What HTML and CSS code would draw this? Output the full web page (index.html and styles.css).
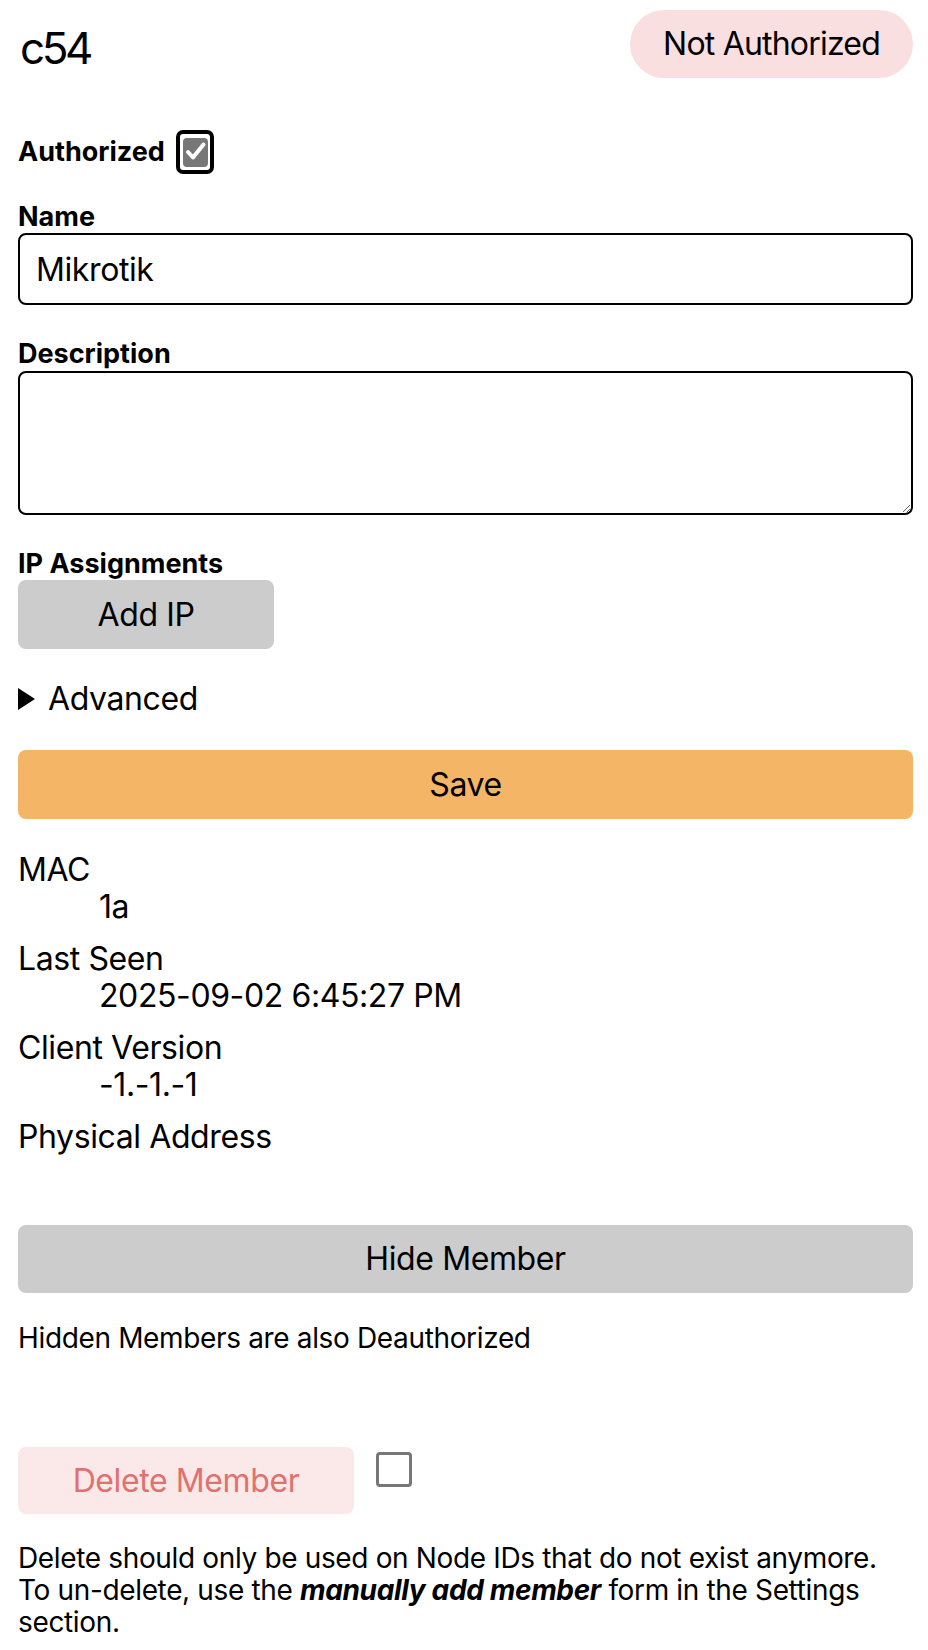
FILE: index.html
```html
<!DOCTYPE html>
<html lang="en">
<head>
    <meta charset="UTF-8">
    <meta name="viewport" content="width=device-width, initial-scale=1.0">
    <title>Member c54</title>
    <link rel="stylesheet" href="styles.css">
</head>
<body>
    <div class="member-head">
        <h1>c54</h1>
        <span class="status">Not Authorized</span>
    </div>
    <form class="member-form" onsubmit="return false">
        <div class="auth-row">
            <label class="auth-label" for="authorized">Authorized</label>
            <span class="check-ring" id="authorized">
                <span class="check-box">
                    <svg width="25" height="29" viewBox="0 0 25 29">
                        <path d="M5 14 L10 19.5 L20.5 6.5" fill="none" stroke="#fff" stroke-width="4" stroke-linecap="round" stroke-linejoin="round"/>
                    </svg>
                </span>
            </span>
        </div>
        <label class="field-label" for="name">Name</label>
        <input type="text" id="name" class="field" value="Mikrotik">
        <label class="field-label" for="description">Description</label>
        <textarea id="description" class="field area"></textarea>
        <label class="field-label">IP Assignments</label>
        <button type="button" class="btn add-ip">Add IP</button>
        <details class="advanced">
            <summary>Advanced</summary>
        </details>
        <button type="submit" class="btn save">Save</button>
    </form>
    <dl class="info">
        <dt>MAC</dt>
        <dd>1a</dd>
        <dt>Last Seen</dt>
        <dd>2025-09-02 6:45:27 PM</dd>
        <dt>Client Version</dt>
        <dd>-1.-1.-1</dd>
        <dt>Physical Address</dt>
        <dd></dd>
    </dl>
    <button type="button" class="btn hide">Hide Member</button>
    <p class="note">Hidden Members are also Deauthorized</p>
    <div class="delete-row">
        <button type="button" class="btn delete">Delete Member</button>
        <span class="confirm-box"></span>
    </div>
    <p class="note delete-note">Delete should only be used on Node IDs that do not exist anymore.<br>
        To un-delete, use the <b><i>manually add member</i></b> form in the Settings section.</p>
</body>
</html>
```

FILE: styles.css
```css
body{
    margin: 0;
    padding: 10px 15px 0 18px;
    font-family: Inter, "Liberation Sans", sans-serif;
    font-size: 32px;
    letter-spacing: -0.4px;
    color: #000;
    background: #fff;
}
.member-head{
    display: flex;
    justify-content: space-between;
    align-items: flex-start;
}
.member-head h1{
    margin: 16px 0 0 2px;
    font-size: 44px;
    font-weight: 400;
    line-height: 1;
    letter-spacing: -3.5px;
}
.status{
    height: 68px;
    line-height: 68px;
    padding: 0 33px;
    border-radius: 34px;
    letter-spacing: -0.8px;
    background-color: #fadfe0;
}
.auth-row{
    display: flex;
    align-items: center;
    gap: 11px;
    margin-top: 52px;
}
.auth-label,
.field-label{
    font-size: 27px;
    font-weight: 700;
    line-height: 30px;
    letter-spacing: 0;
}
.check-ring{
    display: inline-block;
    padding: 4px 2px 3px 3px;
    border: 4px solid #000;
    border-radius: 7px;
}
.check-box{
    display: block;
    width: 25px;
    height: 29px;
    border-radius: 4px;
    background-color: #777;
}
.check-box svg{
    display: block;
}
.field-label{
    display: block;
    margin: 28px 0 1px;
}
.field{
    display: block;
    width: 100%;
    box-sizing: border-box;
    height: 72px;
    padding: 0 16px;
    border: 2px solid #000;
    border-radius: 8px;
    font-family: inherit;
    font-size: 32px;
    letter-spacing: -0.4px;
    color: #000;
}
.field-label[for="description"],
.field-label[for="description"] ~ .field-label{
    margin-top: 34px;
    margin-bottom: 2px;
}
.area{
    height: 144px;
    resize: both;
}
.btn{
    display: block;
    box-sizing: border-box;
    border: none;
    border-radius: 8px;
    font-family: inherit;
    font-size: 32px;
    letter-spacing: -0.4px;
    color: #000;
    background-color: #ccc;
    cursor: pointer;
}
.add-ip{
    width: 256px;
    height: 69px;
    margin-top: -1px;
}
.advanced{
    margin-top: 31px;
    line-height: 38px;
}
.advanced summary{
    display: flex;
    align-items: center;
    list-style: none;
    cursor: pointer;
}
.advanced summary::-webkit-details-marker{
    display: none;
}
.advanced summary::before{
    content: "";
    width: 0;
    height: 0;
    margin-right: 13px;
    border-left: 17px solid #000;
    border-top: 11px solid transparent;
    border-bottom: 11px solid transparent;
}
.save{
    width: 100%;
    height: 69px;
    margin-top: 32px;
    background-color: #f4b566;
}
.info{
    display: flow-root;
    margin: 33px 0 0;
    line-height: 36.5px;
}
.info dd{
    margin: 0 0 16px 81px;
}
.hide{
    width: 100%;
    height: 68px;
    margin-top: 53px;
}
.note{
    margin: 29px 0 0;
    font-size: 28px;
    line-height: 32px;
    letter-spacing: -0.35px;
}
.delete-row{
    display: flex;
    align-items: flex-start;
    margin-top: 93px;
}
.delete{
    width: 336px;
    height: 67px;
    color: #e2706d;
    background-color: #fbe9e9;
}
.confirm-box{
    width: 36px;
    height: 35px;
    box-sizing: border-box;
    margin: 5px 0 0 22px;
    border: 3px solid #777;
    border-radius: 4px;
}
.delete-note{
    margin-top: 28px;
}
```
